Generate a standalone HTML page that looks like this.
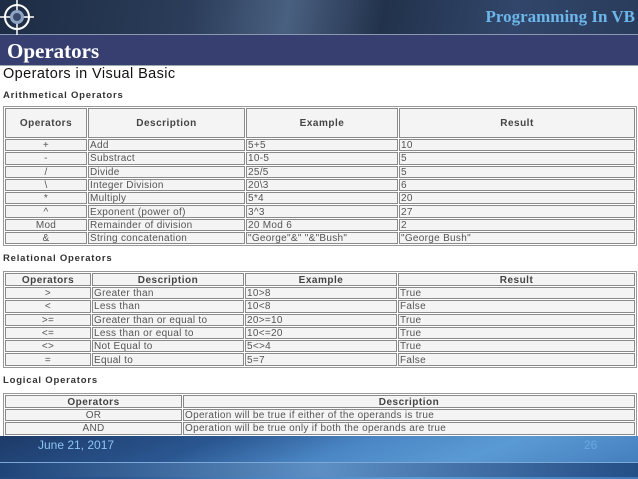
<!DOCTYPE html>
<html><head><style>
*{margin:0;padding:0;box-sizing:border-box}
body{width:638px;height:479px;position:relative;overflow:hidden;background:#fff;font-family:"Liberation Sans",sans-serif}
.top{position:absolute;left:0;top:0;width:638px;height:35px;background:linear-gradient(100deg,#1d2c44 0%,#2b3d5a 30%,#4a6080 45%,#22324c 60%,#31466a 80%,#2a3c5c 100%);border-bottom:1px solid #8a98b0}
.bar{position:absolute;left:0;top:35px;width:638px;height:31px;background:#363f6f;border-bottom:1px solid #9aa}
.foot{position:absolute;left:0;top:436px;width:638px;height:43px;background:linear-gradient(160deg,#1d3a68 0%,#2a5690 30%,#4a86c4 50%,#5a9ad4 70%,#3f78b8 100%)}
.foot .band{position:absolute;left:0;top:26px;width:638px;height:15px;background:linear-gradient(90deg,#1f4478,#5d8fc4 50%,#244e86);border-top:1px solid #7ea8d8}
table{position:absolute;border-collapse:separate;border-spacing:1px;border:1px solid #999;background:#fff;table-layout:fixed}
td{border:1px solid #8a8a8a;background:#f4f4f4;font-size:10px;letter-spacing:0.3px;color:#555;height:12.3px;line-height:9px;padding:1px 1px 0 1px;white-space:nowrap;overflow:hidden;vertical-align:middle}
td.c{text-align:center}
th{border:1px solid #8a8a8a;background:#f4f4f4;font-size:10px;letter-spacing:0.5px;color:#444;font-weight:bold;line-height:9px;padding-top:1px;vertical-align:middle}
.t{position:absolute;font-weight:bold;color:#333;font-size:9.5px;letter-spacing:0.8px}
</style></head><body>
<div class="top"></div>
<svg style="position:absolute;left:0;top:0" width="40" height="36">
<circle cx="17" cy="17" r="12" fill="none" stroke="#fff" stroke-width="2"/>
<line x1="17" y1="0" x2="17" y2="35" stroke="#fff" stroke-width="1.5"/>
<line x1="0" y1="17" x2="34" y2="17" stroke="#fff" stroke-width="1.5"/>
<circle cx="17" cy="17" r="7" fill="#8fa4c4"/>
<circle cx="17" cy="17" r="4" fill="#3a4a6a"/>
</svg>
<div style="position:absolute;right:3px;top:7px;font-family:'Liberation Serif',serif;font-weight:bold;font-size:17px;color:#6cb6ea">Programming In VB</div>
<div class="bar"></div>
<div style="position:absolute;left:7px;top:39px;font-family:'Liberation Serif',serif;font-weight:bold;font-size:21px;color:#fff">Operators</div>
<div style="position:absolute;left:3px;top:66px;font-size:14.5px;letter-spacing:0.4px;color:#111">Operators in Visual Basic</div>
<div class="t" style="left:3px;top:90px">Arithmetical Operators</div>
<table style="left:3px;top:106px;width:634px">
<colgroup><col style="width:82px"><col style="width:157px"><col style="width:152px"><col></colgroup>
<tr><th style="height:30px">Operators</th><th>Description</th><th>Example</th><th>Result</th></tr>
<tr><td class="c">+</td><td>Add</td><td>5+5</td><td>10</td></tr>
<tr><td class="c">-</td><td>Substract</td><td>10-5</td><td>5</td></tr>
<tr><td class="c">/</td><td>Divide</td><td>25/5</td><td>5</td></tr>
<tr><td class="c">\</td><td>Integer Division</td><td>20\3</td><td>6</td></tr>
<tr><td class="c">*</td><td>Multiply</td><td>5*4</td><td>20</td></tr>
<tr><td class="c">^</td><td>Exponent (power of)</td><td>3^3</td><td>27</td></tr>
<tr><td class="c">Mod</td><td>Remainder of division</td><td>20 Mod 6</td><td>2</td></tr>
<tr><td class="c">&amp;</td><td>String concatenation</td><td>"George"&amp;" "&amp;"Bush"</td><td>"George Bush"</td></tr>
</table>
<div class="t" style="left:3px;top:253px">Relational Operators</div>
<table style="left:3px;top:271px;width:634px">
<colgroup><col style="width:86px"><col style="width:152px"><col style="width:152px"><col></colgroup>
<tr><th style="height:13px">Operators</th><th>Description</th><th>Example</th><th>Result</th></tr>
<tr><td class="c">&gt;</td><td>Greater than</td><td>10&gt;8</td><td>True</td></tr>
<tr><td class="c">&lt;</td><td>Less than</td><td>10&lt;8</td><td>False</td></tr>
<tr><td class="c">&gt;=</td><td>Greater than or equal to</td><td>20&gt;=10</td><td>True</td></tr>
<tr><td class="c">&lt;=</td><td>Less than or equal to</td><td>10&lt;=20</td><td>True</td></tr>
<tr><td class="c">&lt;&gt;</td><td>Not Equal to</td><td>5&lt;&gt;4</td><td>True</td></tr>
<tr><td class="c">=</td><td>Equal to</td><td>5=7</td><td>False</td></tr>
</table>
<div class="t" style="left:3px;top:375px">Logical Operators</div>
<table style="left:3px;top:393px;width:634px">
<colgroup><col style="width:177px"><col></colgroup>
<tr><th style="height:13px">Operators</th><th>Description</th></tr>
<tr><td class="c">OR</td><td>Operation will be true if either of the operands is true</td></tr>
<tr><td class="c">AND</td><td>Operation will be true only if both the operands are true</td></tr>
</table>
<div class="foot"><div class="band"></div></div>
<div style="position:absolute;left:38px;top:438px;font-size:12px;color:#8cc4f4">June 21, 2017</div>
<div style="position:absolute;left:584px;top:438px;font-size:12px;color:#6aa8e0">26</div>
</body></html>
